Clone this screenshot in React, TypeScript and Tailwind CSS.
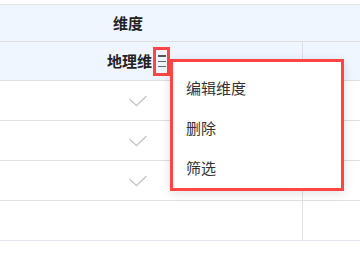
import { Fragment } from 'react'

const rows = [true, true, true, false]
const menuItems = ['编辑维度', '删除', '筛选']

function Check() {
  return (
    <svg width="18" height="12" viewBox="0 0 18 12" fill="none">
      <path
        d="M1 4.5 L7.5 10.5 L17 1.5"
        stroke="#c8c8c8"
        strokeWidth="1.6"
        strokeLinecap="round"
        strokeLinejoin="round"
      />
    </svg>
  )
}

export default function App() {
  return (
    <div
      className="relative h-[265px] w-[360px] overflow-hidden bg-white pt-[4px] text-[15px] text-[#333]"
      style={{ fontFamily: '"Noto Sans CJK SC", "Noto Sans", sans-serif' }}
    >
      <div className="border-t border-[#e3e3e3]">
        <div className="flex h-[37px] items-center border-b border-[#dedede] bg-[#eff6ff] pl-[113px] font-bold text-[#222]">
          维度
        </div>
        <div className="flex h-[39px] border-b border-[#dedede] bg-[#eff6ff]">
          <div className="flex w-[303px] items-center border-r border-[#dedede] pl-[107px] font-bold text-[#222]">
            <span>地理维</span>
            <span className="ml-[1px] flex h-[29px] w-[17px] flex-col items-center justify-center gap-[4px] border-[3px] border-[#ff4545]">
              <span className="h-[2px] w-[8px] bg-[#555]" />
              <span className="h-[1px] w-[8px] bg-[#666]" />
              <span className="h-[1px] w-[8px] bg-[#666]" />
            </span>
          </div>
          <div className="flex-1" />
        </div>
        {rows.map((checked, i) => (
          <Fragment key={i}>
            <div
              className={
                i === rows.length - 1
                  ? 'flex h-[40px] border-b border-[#e4e6ef]'
                  : 'flex h-[40px] border-b border-[#e0e0e0]'
              }
            >
              <div className="flex w-[303px] items-center border-r border-[#e0e0e0] pl-[129px]">
                {checked && <Check />}
              </div>
              <div className="flex-1" />
            </div>
          </Fragment>
        ))}
      </div>

      <div className="absolute left-[170px] top-[59px] w-[174px] border-[3px] border-[#ff4545] bg-white pt-[6px] shadow-[0_2px_10px_rgba(0,0,0,0.12)]">
        {menuItems.map((item) => (
          <div key={item} className="flex h-[40px] items-center pl-[13px] text-[#333]">
            {item}
          </div>
        ))}
      </div>
    </div>
  )
}
